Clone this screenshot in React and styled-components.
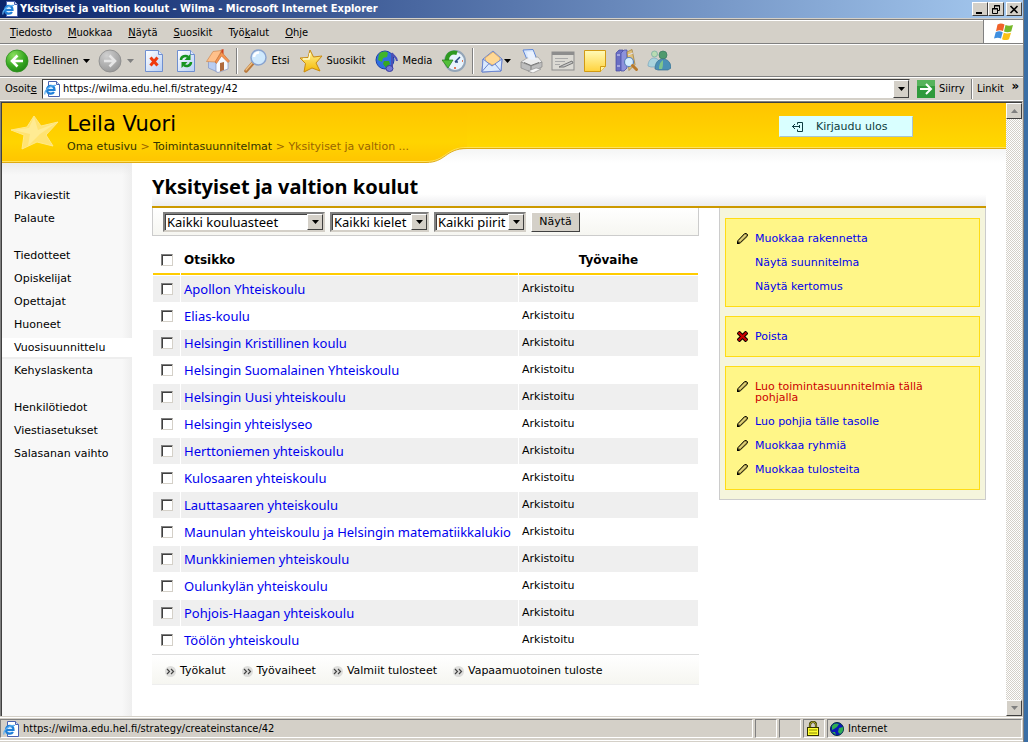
import React from 'react';
import styled, { createGlobalStyle } from 'styled-components'

const Colors = {
    face: '#d4d0c8',
    shadow: '#808080',
    dark: '#404040',
    light: '#ffffff',
    desktop: '#3a6ea5',
    gold: '#cc9900',
    yellow: '#ffcc00',
    link: '#0000ee',
}

const uiFont = '"DejaVu Sans Condensed", "Noto Sans", sans-serif'
const pageFont = '"DejaVu Sans", sans-serif'
const listFont = '"Noto Sans", sans-serif'

const menuItems = [['', 'T', 'iedosto'], ['', 'M', 'uokkaa'], ['', 'N', 'äytä'], ['', 'S', 'uosikit'], ['Työ', 'k', 'alut'], ['', 'O', 'hje']]

const navGroups = [
    ['Pikaviestit', 'Palaute'],
    ['Tiedotteet', 'Opiskelijat', 'Opettajat', 'Huoneet', 'Vuosisuunnittelu', 'Kehyslaskenta'],
    ['Henkilötiedot', 'Viestiasetukset', 'Salasanan vaihto'],
]

const schools = [
    'Apollon Yhteiskoulu',
    'Elias-koulu',
    'Helsingin Kristillinen koulu',
    'Helsingin Suomalainen Yhteiskoulu',
    'Helsingin Uusi yhteiskoulu',
    'Helsingin yhteislyseo',
    'Herttoniemen yhteiskoulu',
    'Kulosaaren yhteiskoulu',
    'Lauttasaaren yhteiskoulu',
    'Maunulan yhteiskoulu ja Helsingin matematiikkalukio',
    'Munkkiniemen yhteiskoulu',
    'Oulunkylän yhteiskoulu',
    'Pohjois-Haagan yhteiskoulu',
    'Töölön yhteiskoulu',
]

const filters = [
    { name: 'Kaikki kouluasteet', width: 162 },
    { name: 'Kaikki kielet', width: 99 },
    { name: 'Kaikki piirit', width: 92 },
]

const actions = [
    [
        { text: 'Muokkaa rakennetta', icon: 'pencil' },
        { text: 'Näytä suunnitelma' },
        { text: 'Näytä kertomus' },
    ],
    [{ text: 'Poista', icon: 'delete' }],
    [
        { text: 'Luo toimintasuunnitelmia tällä pohjalla', icon: 'pencil', hot: true },
        { text: 'Luo pohjia tälle tasolle', icon: 'pencil' },
        { text: 'Muokkaa ryhmiä', icon: 'pencil' },
        { text: 'Muokkaa tulosteita', icon: 'pencil' },
    ],
]

const tools = ['Työkalut', 'Työvaiheet', 'Valmiit tulosteet', 'Vapaamuotoinen tuloste']

/* ---------- icons ---------- */

const Icon = ({ size = 24, children }) => (
    <svg width={size} height={size} viewBox={`0 0 ${size} ${size}`} aria-hidden="true">{children}</svg>
)

const Defs = () => (
    <HiddenSvg width="0" height="0" aria-hidden="true">
        <defs>
            <radialGradient id="green" cx="0.35" cy="0.25" r="0.9">
                <stop offset="0" stopColor="#8be05f" />
                <stop offset="0.55" stopColor="#37a822" />
                <stop offset="1" stopColor="#1c7a12" />
            </radialGradient>
            <radialGradient id="grey" cx="0.35" cy="0.25" r="0.9">
                <stop offset="0" stopColor="#d0d0d0" />
                <stop offset="1" stopColor="#8f8f8f" />
            </radialGradient>
            <linearGradient id="paper" x1="0" y1="0" x2="1" y2="1">
                <stop offset="0" stopColor="#ffffff" />
                <stop offset="1" stopColor="#b9d0f5" />
            </linearGradient>
            <linearGradient id="sun" x1="0" y1="0" x2="0" y2="1">
                <stop offset="0" stopColor="#fff49a" />
                <stop offset="1" stopColor="#f5b800" />
            </linearGradient>
            <linearGradient id="note" x1="0" y1="0" x2="0" y2="1">
                <stop offset="0" stopColor="#fffbb8" />
                <stop offset="1" stopColor="#ffd23c" />
            </linearGradient>
        </defs>
    </HiddenSvg>
)

const BackIcon = () => (
    <Icon>
        <circle cx="12" cy="12" r="11" fill="url(#green)" stroke="#2b8f1b" strokeWidth="0.8" />
        <path d="M18 12H7.500M12.500 6.500L7 12l5.500 5.500" fill="none" stroke="#fff" strokeWidth="2.600" />
    </Icon>
)
const ForwardIcon = () => (
    <Icon>
        <circle cx="12" cy="12" r="11" fill="url(#grey)" stroke="#8a8a8a" strokeWidth="0.8" />
        <path d="M6 12h10.500M11.500 6.500L17 12l-5.500 5.500" fill="none" stroke="#e6e6e6" strokeWidth="2.600" />
    </Icon>
)
const StopIcon = () => (
    <Icon>
        <path d="M3.500 1.500h13l4 4v17h-17z" fill="url(#paper)" stroke="#6f8fd0" />
        <path d="M16.500 1.500v4h4" fill="#dfe9fb" stroke="#6f8fd0" />
        <path d="M8.500 8.500l7 8M15.500 8.500l-7 8" stroke="#f03a0c" strokeWidth="3" />
    </Icon>
)
const RefreshIcon = () => (
    <Icon>
        <path d="M3.500 1.500h13l4 4v17h-17z" fill="url(#paper)" stroke="#6f8fd0" />
        <path d="M16.500 1.500v4h4" fill="#dfe9fb" stroke="#6f8fd0" />
        <path d="M7 11c0-4 5-5 7-3" fill="none" stroke="#169422" strokeWidth="2.500" />
        <path d="M16.500 5v6h-6z" fill="#169422" />
        <path d="M17 13c0 4-5 5-7 3" fill="none" stroke="#169422" strokeWidth="2.500" />
        <path d="M7.500 19v-6h6z" fill="#169422" />
    </Icon>
)
const HomeIcon = () => (
    <Icon>
        <path d="M2.500 12v7l9 4V11L7 5z" fill="#b9cdf2" stroke="#7f92c4" strokeWidth="0.7" />
        <path d="M10 12l6-7 6 7v8l-10 3.500-2-1z" fill="#f7faff" stroke="#7f92c4" strokeWidth="0.7" />
        <path d="M14 14l4-1v8l-4 1.500z" fill="#b06a3c" />
        <path d="M14.500 1l3-1v5l-3 1z" fill="#d4401a" />
        <path d="M.5 12.500L7 2.500 15.500 1.500 9.500 13z" fill="#ffc08a" stroke="#d08a50" strokeWidth="0.7" />
        <path d="M9 13l6.500-10 8 9-1.500 1.500-6.500-6.500-5 7.500z" fill="#f59450" stroke="#c46c30" strokeWidth="0.6" />
    </Icon>
)
const SearchIcon = () => (
    <Icon>
        <path d="M9 14l-7 8" stroke="#b9783b" strokeWidth="3.500" strokeLinecap="round" />
        <path d="M8.500 13.500l-6.500 7.500" stroke="#f0c283" strokeWidth="1.200" strokeLinecap="round" />
        <circle cx="14.500" cy="8.500" r="7.500" fill="#cfe9fd" stroke="#8aa4cf" strokeWidth="1.500" />
        <path d="M10 8a5 5 0 0 1 5-4.500" fill="none" stroke="#fff" strokeWidth="2.500" />
    </Icon>
)
const StarIcon = () => (
    <Icon>
        <path d="M11 1l3.500 7L23 7l-6 7 4 8-8-3-8 4 1.500-8.500L1 9l8-.5z" fill="url(#sun)" stroke="#c98a10" />
        <path d="M11 4l-1 6-6 0" fill="none" stroke="#fffbd0" strokeWidth="1.500" />
    </Icon>
)
const MediaIcon = () => (
    <Icon>
        <circle cx="10" cy="11" r="9" fill="#2f6fe0" stroke="#1c3fa8" />
        <path d="M4 5c3-3 7-3 9-1l-1 4-4 1-1 4-4-2z" fill="#3fb52c" />
        <path d="M9 12l5 0 1 3-4 4-3-4z" fill="#37a822" />
        <path d="M17 19V4c1 3 5 4 5 8" fill="none" stroke="#4b4fb5" strokeWidth="2" />
        <ellipse cx="14.500" cy="19.500" rx="3.500" ry="3" fill="#7478d8" stroke="#3a3e9c" />
    </Icon>
)
const HistoryIcon = () => (
    <Icon>
        <circle cx="13" cy="12" r="10" fill="#e9f4fd" stroke="#93a5b8" strokeWidth="2" />
        <path d="M13 13l5-5M13 13h3" stroke="#2a4a80" strokeWidth="1.500" />
        <path d="M13 18v2M20 12h1" stroke="#e05020" strokeWidth="1.500" />
        <path d="M15 4c-6-2-10 2-10 7" fill="none" stroke="#2f9a20" strokeWidth="4" />
        <path d="M0 11h11l-5 8z" fill="#52bf3a" stroke="#1f7a14" strokeWidth="0.7" />
    </Icon>
)
const MailIcon = () => (
    <Icon>
        <path d="M3 10l10-8 9 8-1 12-19 1z" fill="#bcd5fa" stroke="#6c86cf" />
        <path d="M5 9l8-6 7 6-1 5-6 2-7-3z" fill="#ffd894" stroke="#d79b50" strokeWidth="0.7" />
        <path d="M3 10l9 7 10-7-1 12-19 1z" fill="#dbeafe" stroke="#6c86cf" />
        <path d="M2 22.500l7-8M21 22l-6-7" stroke="#6c86cf" />
    </Icon>
)
const PrintIcon = () => (
    <Icon>
        <path d="M4 1l10-.5 4 10H8z" fill="#d7e7fd" stroke="#5f86d8" />
        <path d="M2 13l6-4 11-1 4 5-10 5z" fill="#ededed" stroke="#999" strokeWidth="0.7" />
        <path d="M2 13l10 4v6L2 19zM12 17l11-4v5l-11 5z" fill="#bdbdbd" stroke="#888" strokeWidth="0.7" />
        <path d="M8 3l6-.5 3 8H9.500z" fill="#eaf2ff" />
        <path d="M9 22l8-3 5 1-8 4z" fill="#f7f7f7" stroke="#888" strokeWidth="0.6" />
        <path d="M5 13.500l7 3 8-3" fill="none" stroke="#777" />
    </Icon>
)
const EditIcon = () => (
    <Icon>
        <rect x="1" y="3" width="22" height="18" fill="#dcdad4" stroke="#8d8d8d" />
        <path d="M1 4.500h22" stroke="#8d8d8d" strokeWidth="3" />
        <path d="M4 9.500h13M4 12.500h10M4 15.500h5" stroke="#aaa" />
        <path d="M8 18l4-2 9-4 1 2-9 4z" fill="#c8c8c8" stroke="#777" />
    </Icon>
)
const NoteIcon = () => (
    <Icon>
        <path d="M1.500 1.500h21v16l-5 5h-16z" fill="url(#note)" stroke="#d19a13" />
        <path d="M17.500 22.500v-5h5" fill="#fff3a0" stroke="#d19a13" />
    </Icon>
)
const ResearchIcon = () => (
    <Icon>
        <path d="M1 4l3-3h4v18l-3 3H1z" fill="#6a6fc4" stroke="#4347a0" strokeWidth="0.7" />
        <path d="M6 4l3-3h3v18l-3 3H6z" fill="#8d92dc" stroke="#4347a0" strokeWidth="0.7" />
        <path d="M12 3l5-2.500 3 15-6 6z" fill="#e0c07a" stroke="#9b7a35" strokeWidth="0.7" />
        <path d="M2 6h3M2 17h3M13 6l5-2" stroke="#dedff8" />
        <circle cx="14" cy="13" r="4.500" fill="#d2ecff" stroke="#5c83b8" strokeWidth="1.200" />
        <path d="M17.500 16.500l4 4" stroke="#b87a2d" strokeWidth="3" strokeLinecap="round" />
    </Icon>
)
const PeopleIcon = () => (
    <Icon>
        <circle cx="7.500" cy="5" r="3" fill="#b9dcb2" stroke="#6fa6a0" strokeWidth="0.7" />
        <path d="M1 17c0-5 3-8 6-8s5 2 5 5v4H4z" fill="#a9d3dd" stroke="#78a5bd" strokeWidth="0.7" />
        <circle cx="16" cy="6" r="4" fill="#4f9a6d" stroke="#3a7a62" strokeWidth="0.7" />
        <path d="M8 20c0-6 3-10 8-10s8 4 8 9l-3 2H11z" fill="#4a90b6" stroke="#36708f" strokeWidth="0.7" />
        <path d="M12 20c0-4 1-7 4-9 0 4 0 7-1 9z" fill="#7fc48c" />
    </Icon>
)
const PageIcon = () => (
    <Icon size={16}>
        <path d="M4.500 0.500h8l3 3v12h-11z" fill="#fff" stroke="#4a62b0" />
        <path d="M12.500 0.500v3h3" fill="#cfdcf5" stroke="#4a62b0" />
        <path d="M3 9h7.500c0-5.500-7.500-5.500-7.500 0 0 4.500 5.500 4.500 7 2" fill="#d8ecfc" stroke="#1f7fd8" strokeWidth="2.200" />
        <path d="M1 13.500c-1-4 5-10 11-9" fill="none" stroke="#5fb0f0" strokeWidth="1.200" />
    </Icon>
)
const FlagIcon = () => (
    <svg width="20" height="18" viewBox="0 0 20 18" aria-hidden="true">
        <path d="M3.500 1.500c3-1.500 4.500-1 7 0L9 8C6.500 7 5 7 2 8.200z" fill="#f0622a" />
        <path d="M11.500 2c2.500 1 4.500 1 7.500 0l-1.800 6.500c-3 1-4.500 1-7.200 0z" fill="#76b82a" />
        <path d="M1.700 9.200c3-1.200 4.500-1 7 0L7 15.500c-2.500-1-4-1-7 0z" fill="#3f8fe0" />
        <path d="M9.800 9.700c2.500 1 4 1 7.200 0l-2 6.500c-3 1.300-4.500 1-7 0z" fill="#fbc116" />
    </svg>
)
const GoIcon = () => (
    <svg width="18" height="18" viewBox="0 0 18 18" aria-hidden="true">
        <rect width="18" height="18" fill="#2f9a3c" />
        <path d="M0 0h18v6H0z" fill="#56b35c" />
        <path d="M3 9h11M9 4l5 5-5 5" fill="none" stroke="#fff" strokeWidth="2" />
    </svg>
)
const Caret = ({ color = '#000' }) => (
    <svg width="7" height="4" viewBox="0 0 7 4" aria-hidden="true"><path d="M0 0h7L3.500 4z" fill={color} /></svg>
)
const CaretUp = () => (
    <svg width="7" height="4" viewBox="0 0 7 4" aria-hidden="true"><path d="M0 4h7L3.500 0z" fill="#808080" /></svg>
)
const LogoutIcon = () => (
    <svg width="11" height="11" viewBox="0 0 11 11" aria-hidden="true">
        <path d="M0 5.500h7M3 3L.5 5.500 3 8M5.500 3.500v-2h5v9h-5v-2M7.500 4v3" fill="none" stroke="#0d3c40" />
    </svg>
)
const PencilIcon = () => (
    <svg width="11" height="11" viewBox="0 0 11 11" aria-hidden="true">
        <path d="M.5 10.500l.5-3L7.500.7 9 .5l1.500 1-.3 1.800-6.700 6.400z" fill="#b9a94c" stroke="#000" />
        <path d="M2.500 8L8.500 2" stroke="#fff3a8" />
        <path d="M0 8v3h3z" />
    </svg>
)
const DeleteIcon = () => (
    <svg width="11" height="11" viewBox="0 0 11 11" aria-hidden="true">
        <path d="M1 1l9 9M10 1l-9 9" stroke="#000" strokeWidth="4.200" />
        <path d="M1.500 1.500l8 8M9.500 1.500l-8 8" stroke="#c80000" strokeWidth="2.400" />
    </svg>
)
const ChevronsIcon = () => (
    <svg width="11" height="11" viewBox="0 0 11 11" aria-hidden="true">
        <circle cx="5.500" cy="5.500" r="5.500" fill="#dededc" />
        <path d="M2 3l2.500 2.500L2 8M6 3l2.500 2.500L6 8" fill="none" stroke="#444" strokeWidth="1.200" />
    </svg>
)
const LockIcon = () => (
    <svg width="14" height="15" viewBox="0 0 14 15" aria-hidden="true">
        <path d="M4 7V4c0-4 6-4 6 0v3" fill="none" stroke="#333300" strokeWidth="2.200" />
        <path d="M4 7V4c0-4 6-4 6 0v3" fill="none" stroke="#d8d040" strokeWidth="0.8" />
        <rect x="1.500" y="6.500" width="11" height="8" fill="#ffff30" stroke="#333300" />
        <path d="M3 9h8M3 12h8" stroke="#888800" />
    </svg>
)
const GlobeIcon = () => (
    <svg width="14" height="14" viewBox="0 0 14 14" aria-hidden="true">
        <circle cx="7" cy="7" r="6.500" fill="#0a18b8" stroke="#003040" />
        <path d="M2 4c2-3 5-3 7-2L7 5 4 7 2 8zM9 6l4-1c1 3-1 6-3 7l-2-2zM2 10l3 0 1 3z" fill="#2fae50" />
    </svg>
)
const HeaderStar = () => (
    <svg width="50" height="36" viewBox="0 0 50 36" aria-hidden="true">
        <path d="M24 1l7 10 17-4-12 13 7 11-16-4-15 7 2-14L1 15l16-3z" fill="#ffe373" stroke="#ffea88" />
        <path d="M24 2l4 13 18-7-16 11-12 12 2-12L3 15l16-2z" fill="#fff0a8" opacity="0.6" />
    </svg>
)

/* Left part of the banner: it hangs lower and steps up with an S-curve. */
const BannerTab = () => (
    <TabSvg width="465" height="62" viewBox="0 0 465 62" aria-hidden="true">
        <defs>
            <linearGradient id="tab" gradientUnits="userSpaceOnUse" x1="0" y1="0" x2="0" y2="60">
                <stop offset="0" stopColor="#ffc400" />
                <stop offset="0.65" stopColor="#ffd400" />
                <stop offset="1" stopColor="#ffc400" />
            </linearGradient>
        </defs>
        <path d="M0 0H465V45C443 45 444 59 424 59H0z" fill="url(#tab)" />
        <path d="M465 44.500C443 44.500 444 58.500 424 58.500H0" fill="none" stroke="#ffe25a" />
        <path d="M465 45.500C443 45.500 444 59.500 424 59.500H0" fill="none" stroke="#e0ab10" />
    </TabSvg>
)

const actionIcons = { pencil: <PencilIcon />, delete: <DeleteIcon /> }

/* ---------- browser chrome ---------- */

const Toolbar = () => (
    <ToolRow>
        <ToolButton $min={92}><BackIcon />Edellinen<Spacer /><Caret /></ToolButton>
        <ToolButton $min={44} aria-label="Seuraava"><ForwardIcon /><Spacer /><Caret color="#808080" /></ToolButton>
        <ToolButton aria-label="Pysäytä"><StopIcon /></ToolButton>
        <ToolButton aria-label="Päivitä"><RefreshIcon /></ToolButton>
        <ToolButton aria-label="Koti"><HomeIcon /></ToolButton>
        <Divider />
        <ToolButton $min={55}><SearchIcon />Etsi</ToolButton>
        <ToolButton $min={76}><StarIcon />Suosikit</ToolButton>
        <ToolButton $min={67}><MediaIcon />Media</ToolButton>
        <ToolButton aria-label="Historia"><HistoryIcon /></ToolButton>
        <Divider />
        <ToolButton $tight aria-label="Posti"><MailIcon /><Caret /></ToolButton>
        <ToolButton aria-label="Tulosta"><PrintIcon /></ToolButton>
        <ToolButton aria-label="Muokkaa"><EditIcon /></ToolButton>
        <ToolButton aria-label="Muistiinpano"><NoteIcon /></ToolButton>
        <ToolButton aria-label="Tutki"><ResearchIcon /></ToolButton>
        <ToolButton aria-label="Messenger"><PeopleIcon /></ToolButton>
    </ToolRow>
)

const AddressBar = () => (
    <AddressRow>
        <AddressLabel htmlFor="address">Osoit<u>e</u></AddressLabel>
        <AddressField>
            <PageIcon />
            <AddressInput id="address" defaultValue="https://wilma.edu.hel.fi/strategy/42" />
            <DropButton aria-label="Avaa lista"><Caret /></DropButton>
        </AddressField>
        <GoButton><GoIcon />Siirry</GoButton>
        <Links>Linkit<b>»</b></Links>
    </AddressRow>
)

const WindowControls = () => (
    <Controls>
        <ControlButton aria-label="Pienennä">
            <svg width="10" height="9" viewBox="0 0 10 9"><path d="M1 7h6v2H1z" /></svg>
        </ControlButton>
        <ControlButton aria-label="Palauta">
            <svg width="10" height="9" viewBox="0 0 10 9">
                <path d="M3.500 3V.5h5v5H7M3 1h6M1.500 3.500h5v5h-5zM1 4h6" fill="none" stroke="#000" />
            </svg>
        </ControlButton>
        <ControlButton aria-label="Sulje" $spaced>
            <svg width="10" height="9" viewBox="0 0 10 9"><path d="M1.500 1l7 7M8.500 1l-7 7" stroke="#000" strokeWidth="1.600" /></svg>
        </ControlButton>
    </Controls>
)

/* ---------- page ---------- */

const PageHeader = () => (
    <Banner>
        <BannerTab />
        <BannerStar><HeaderStar /></BannerStar>
        <BannerText>
            <UserName>Leila Vuori</UserName>
            <Crumbs>
                <a href="#etusivu">Oma etusivu</a> &gt; <a href="#suunnitelmat">Toimintasuunnitelmat</a> &gt; Yksityiset ja valtion ...
            </Crumbs>
        </BannerText>
        <LogoutButton><LogoutIcon />Kirjaudu ulos</LogoutButton>
    </Banner>
)

const Sidebar = () => (
    <SideNav>
        {navGroups.map(group => (
            <NavGroup key={group[0]}>
                {group.map(item => (
                    <NavItem key={item} href="#nav" $active={item === 'Vuosisuunnittelu'}>{item}</NavItem>
                ))}
            </NavGroup>
        ))}
    </SideNav>
)

const FilterBar = () => (
    <Filters>
        {filters.map(f => (
            <SelectBox key={f.name} $width={f.width}>
                <Select aria-label={f.name}><option>{f.name}</option></Select>
                <SelectArrow><Caret /></SelectArrow>
            </SelectBox>
        ))}
        <ShowButton>Näytä</ShowButton>
    </Filters>
)

const SchoolTable = () => (
    <Table>
        <thead>
            <tr>
                <CheckHead><Check type="checkbox" aria-label="Valitse kaikki" /></CheckHead>
                <Head>Otsikko</Head>
                <Head $center>Työvaihe</Head>
            </tr>
        </thead>
        <tbody>
            {schools.map((school, i) => (
                <Row key={school} $odd={i % 2 === 0}>
                    <CheckCell><Check type="checkbox" aria-label={school} /></CheckCell>
                    <NameCell><a href="#koulu">{school}</a></NameCell>
                    <td>Arkistoitu</td>
                </Row>
            ))}
        </tbody>
    </Table>
)

const ActionPanel = () => (
    <Panel>
        {actions.map(group => (
            <PanelBox key={group[0].text}>
                {group.map(action => (
                    <Action key={action.text}>
                        <ActionIcon>{actionIcons[action.icon]}</ActionIcon>
                        <ActionLink href="#toiminto" $hot={action.hot}>{action.text}</ActionLink>
                    </Action>
                ))}
            </PanelBox>
        ))}
    </Panel>
)

const App = () => {
    return (
        <Desktop>
            <GlobalStyle />
            <Defs />
            <Window>
                <TitleBar>
                    <PageIcon />
                    <WindowTitle>Yksityiset ja valtion koulut - Wilma - Microsoft Internet Explorer</WindowTitle>
                    <WindowControls />
                </TitleBar>
                <MenuBar>
                    {menuItems.map(([before, key, after]) => (
                        <MenuItem key={key}>{before}<u>{key}</u>{after}</MenuItem>
                    ))}
                    <FlagBox><FlagIcon /></FlagBox>
                </MenuBar>
                <Toolbar />
                <AddressBar />
                <Viewport>
                    <Page>
                        <PageHeader />
                        <Body>
                            <Sidebar />
                            <Main>
                                <Title>Yksityiset ja valtion koulut</Title>
                                <Columns>
                                    <ListColumn>
                                        <FilterBar />
                                        <SchoolTable />
                                        <ListTools>
                                            {tools.map(t => <ListTool key={t}><ChevronsIcon />{t}</ListTool>)}
                                        </ListTools>
                                    </ListColumn>
                                    <ActionPanel />
                                </Columns>
                            </Main>
                        </Body>
                    </Page>
                    <ScrollTrack>
                        <ScrollButton aria-label="Ylös"><CaretUp /></ScrollButton>
                        <ScrollButton aria-label="Alas"><Caret color="#808080" /></ScrollButton>
                    </ScrollTrack>
                </Viewport>
                <StatusBar>
                    <StatusPane $grow><PageIcon />https://wilma.edu.hel.fi/strategy/createinstance/42</StatusPane>
                    <StatusPane $width={22} />
                    <StatusPane $width={22} />
                    <StatusPane $width={22}><LockIcon /></StatusPane>
                    <StatusPane $width={195}><GlobeIcon />Internet</StatusPane>
                </StatusBar>
            </Window>
        </Desktop>
    )
}
export default App

const GlobalStyle = createGlobalStyle`
  * { box-sizing: border-box; }
  body { margin: 0; }
  svg { display: block; flex: none; }
  button {
    margin: 0;
    padding: 0;
    border: 0;
    background: none;
    color: #000;
    font: inherit;
  }
  a { text-decoration: none; }
`
const HiddenSvg = styled.svg`
  position: absolute;
`
const Desktop = styled.div`
    height: 100vh;
    padding-right: 4px;
    background: ${Colors.desktop};
    color: #000;
    font: 11px/14px ${uiFont};
`
const Window = styled.div`
    display: flex;
    flex-direction: column;
    height: 100%;
    background: ${Colors.face};
    border-right: 1px solid ${Colors.shadow};
`
const TitleBar = styled.div`
    display: flex;
    align-items: center;
    flex: none;
    height: 18px;
    padding: 0 1px 0 2px;
    gap: 2px;
    background: linear-gradient(to right, #0a246a, #a6caf0);
`
const WindowTitle = styled.span`
    flex: 1;
    color: white;
    font-weight: bold;
`
const Controls = styled.div`
    display: flex;
`
const ControlButton = styled.button`
    display: flex;
    align-items: center;
    justify-content: center;
    width: 16px;
    height: 14px;
    margin-left: ${p => p.$spaced ? '2px' : '0'};
    background: ${Colors.face};
    border: 1px solid;
    border-color: ${Colors.light} ${Colors.dark} ${Colors.dark} ${Colors.light};
`
const MenuBar = styled.div`
    display: flex;
    align-items: center;
    flex: none;
    height: 25px;
    margin-top: 1px;
    padding-left: 2px;
    border-top: 1px solid ${Colors.shadow};
    border-bottom: 1px solid ${Colors.shadow};
    box-shadow: inset 0 1px ${Colors.light};
`
const MenuItem = styled.button`
    padding: 2px 8px 0;
`
const FlagBox = styled.div`
    display: flex;
    align-items: center;
    justify-content: center;
    align-self: stretch;
    width: 40px;
    margin-left: auto;
    background: white;
    border-left: 1px solid ${Colors.shadow};
`
const ToolRow = styled.div`
    display: flex;
    align-items: center;
    flex: none;
    height: 33px;
    padding-left: 1px;
    border-top: 1px solid ${Colors.light};
    border-bottom: 1px solid ${Colors.shadow};
`
const ToolButton = styled.button`
    display: flex;
    align-items: center;
    gap: ${p => p.$tight ? 0 : 4}px;
    min-width: ${p => p.$min || 32}px;
    padding: 0 4px;
`
const Spacer = styled.span`
    flex: 1;
    margin-left: -4px;
`
const Divider = styled.span`
    width: 2px;
    height: 26px;
    margin: 0 2px;
    border-left: 1px solid ${Colors.shadow};
    border-right: 1px solid ${Colors.light};
`
const AddressRow = styled.div`
    display: flex;
    align-items: center;
    flex: none;
    height: 24px;
    padding-left: 5px;
    border-top: 1px solid ${Colors.light};
    border-bottom: 1px solid ${Colors.light};
`
const AddressLabel = styled.label`
    width: 37px;
`
const AddressField = styled.div`
    display: flex;
    align-items: center;
    flex: 1;
    height: 20px;
    padding-left: 1px;
    background: white;
    border: 1px solid;
    border-color: ${Colors.dark} ${Colors.face} ${Colors.face} ${Colors.dark};
`
const AddressInput = styled.input`
    flex: 1;
    padding: 0 3px;
    border: 0;
    outline: 0;
    background: none;
    font: inherit;
`
const DropButton = styled.button`
    display: flex;
    align-items: center;
    justify-content: center;
    width: 16px;
    height: 18px;
    background: ${Colors.face};
    border: 1px solid;
    border-color: ${Colors.light} ${Colors.dark} ${Colors.dark} ${Colors.light};
`
const GoButton = styled.button`
    display: flex;
    align-items: center;
    gap: 4px;
    width: 61px;
    padding-left: 7px;
`
const Links = styled.div`
    display: flex;
    justify-content: space-between;
    width: 52px;
    padding: 3px 4px 3px 5px;
    border-left: 1px solid ${Colors.shadow};
    box-shadow: inset 1px 0 ${Colors.light};

    b {
        font-size: 13px;
        line-height: 8px;
    }
`
const Viewport = styled.div`
    display: flex;
    flex: 1;
    min-height: 0;
    padding: 1px 0 0 1px;
    background: ${Colors.dark};
    border-top: 1px solid ${Colors.shadow};
    border-left: 1px solid ${Colors.shadow};
    border-right: 1px solid ${Colors.face};
`
const Page = styled.div`
    display: flex;
    flex-direction: column;
    flex: 1;
    overflow: hidden;
    background: white;
    font-family: ${pageFont};
`
const Banner = styled.header`
    display: flex;
    position: relative;
    flex: none;
    height: 60px;
    padding-right: 93px;
    background: linear-gradient(#ffc400, #ffd800 44px, #ffe25a 44px, #ffe25a 45px, #e0ab10 45px, #e0ab10 46px, #f4f5f5 46px, #ffffff 60px);
`
const TabSvg = styled.svg`
    position: absolute;
    left: 0;
    top: 0;
`
const BannerStar = styled.div`
    position: relative;
    width: 65px;
    padding: 12px 0 0 8px;
`
const BannerText = styled.div`
    position: relative;
    flex: 1;
    padding-top: 9px;
`
const UserName = styled.div`
    font-size: 21px;
    line-height: 24px;
`
const Crumbs = styled.div`
    padding-top: 4px;
    color: #996600;

    a {
        color: #333300;
    }
`
const LogoutButton = styled.button`
    display: flex;
    position: relative;
    align-items: center;
    gap: 13px;
    width: 134px;
    height: 21px;
    margin-top: 13px;
    padding-left: 12px;
    background: #d9ffff;
    border: 1px solid;
    border-color: #d9ffff #a8c4d0 #a8c4d0 #d9ffff;
    color: #0d3c40;
`
const Body = styled.div`
    display: flex;
    flex: 1;
`
const SideNav = styled.nav`
    display: flex;
    flex-direction: column;
    flex: none;
    gap: 18px;
    width: 130px;
    padding-top: 23px;
    background:
        linear-gradient(#ebebeb, transparent 12px),
        linear-gradient(to right, #f8f8f8 120px, #eeeeee);
`
const NavGroup = styled.div`
    display: flex;
    flex-direction: column;
    gap: 4px;
`
const NavItem = styled.a`
    padding-left: 12px;
    color: #000;
    line-height: 19px;
    background: ${p => p.$active ? 'white' : 'none'};
    box-shadow: ${p => p.$active ? '0 2px #eeeeee' : 'none'};
`
const Main = styled.main`
    flex: 1;
    padding: 11px 20px 0 20px;
`
const Title = styled.h1`
    margin: 0;
    padding-bottom: 6px;
    border-bottom: 2px solid ${Colors.gold};
    background: linear-gradient(#ffffff 20px, #ececee);
    font: bold 20px/26px ${listFont};
`
const Columns = styled.div`
    display: flex;
    align-items: flex-start;
    gap: 20px;
`
const ListColumn = styled.div`
    flex: 1;
`
const Filters = styled.div`
    display: flex;
    align-items: center;
    gap: 5px;
    height: 28px;
    padding-left: 10px;
    background: linear-gradient(#ffffff, #f6f6f1);
    border: 1px solid #cccccc;
    border-top: 0;
`
const SelectBox = styled.span`
    display: flex;
    position: relative;
    width: ${p => p.$width}px;
    height: 20px;
    border: 2px solid;
    border-color: ${Colors.shadow} ${Colors.face} ${Colors.face} ${Colors.shadow};
    background: white;
    box-shadow: inset 1px 1px ${Colors.dark};
`
const Select = styled.select`
    flex: 1;
    padding: 0 0 0 2px;
    border: 0;
    outline: 0;
    appearance: none;
    background: none;
    color: #000;
    font: 13px/16px ${listFont};
`
const SelectArrow = styled.span`
    display: flex;
    position: absolute;
    top: 0;
    right: 0;
    align-items: center;
    justify-content: center;
    width: 16px;
    height: 16px;
    background: ${Colors.face};
    border: 1px solid;
    border-color: ${Colors.light} ${Colors.dark} ${Colors.dark} ${Colors.light};
    pointer-events: none;
`
const ShowButton = styled.button`
    width: 49px;
    height: 20px;
    background: ${Colors.face};
    border: 1px solid;
    border-color: ${Colors.light} ${Colors.dark} ${Colors.dark} ${Colors.light};
`
const Table = styled.table`
    width: 100%;
    margin-top: 9px;
    border-spacing: 1px;
    font-size: 11px;

    td, th {
        padding: 0 3px;
    }
`
const Head = styled.th`
    height: 29px;
    border-bottom: 2px solid ${Colors.yellow};
    font-size: 12px;
    text-align: ${p => p.$center ? 'center' : 'left'};
`
const CheckHead = styled(Head)`
    width: 27px;
`
const Row = styled.tr`
    height: 26px;
    background: ${p => p.$odd ? '#efefef' : 'white'};
`
const CheckCell = styled.td`
    text-align: center;
`
const NameCell = styled.td`
    width: 337px;
    font-family: ${listFont};
    font-size: 13px;
    white-space: nowrap;

    a {
        color: ${Colors.link};
    }
`
const Check = styled.input`
    display: block;
    appearance: none;
    width: 12px;
    height: 12px;
    margin: 0 auto;
    background: white;
    border: 1px solid;
    border-color: ${Colors.shadow} ${Colors.face} ${Colors.face} ${Colors.shadow};
    box-shadow: inset 1px 1px ${Colors.dark};
`
const ListTools = styled.div`
    display: flex;
    align-items: center;
    gap: 16px;
    height: 31px;
    padding: 3px 0 0 13px;
    background: linear-gradient(#ffffff, #f6f6f1);
    border-top: 1px solid #dddddd;
    border-bottom: 1px solid #eeeeee;
`
const ListTool = styled.button`
    display: flex;
    align-items: center;
    gap: 4px;
`
const Panel = styled.aside`
    display: flex;
    flex-direction: column;
    flex: none;
    gap: 9px;
    width: 267px;
    padding: 10px 5px 9px;
    background: #f5f5dc;
    border: 1px solid #cccccc;
    border-top: 0;
`
const PanelBox = styled.div`
    padding: 8px 12px 7px 11px;
    background: #fff688;
    border: 1px solid #ffdc14;
`
const Action = styled.div`
    display: flex;
    padding: 6px 0 7px;
    line-height: 11px;
`
const ActionIcon = styled.span`
    flex: none;
    width: 18px;
`
const ActionLink = styled.a`
    max-width: 190px;
    color: ${p => p.$hot ? '#cc0000' : Colors.link};
`
const ScrollTrack = styled.div`
    display: flex;
    flex-direction: column;
    justify-content: space-between;
    width: 16px;
    background: repeating-conic-gradient(${Colors.face} 0 25%, #ffffff 0 50%) 0 0 / 2px 2px;
`
const ScrollButton = styled.button`
    display: flex;
    align-items: center;
    justify-content: center;
    width: 16px;
    height: 16px;
    background: ${Colors.face};
    border: 1px solid;
    border-color: ${Colors.light} ${Colors.dark} ${Colors.dark} ${Colors.light};
`
const StatusBar = styled.footer`
    display: flex;
    flex: none;
    gap: 2px;
    height: 26px;
    padding: 2px 1px 3px 0;
    border-top: 1px solid ${Colors.face};
    border-bottom: 1px solid ${Colors.face};
    box-shadow: inset 0 1px ${Colors.light}, inset 0 -1px ${Colors.light};
`
const StatusPane = styled.div`
    display: flex;
    align-items: center;
    flex: ${p => p.$grow ? '1' : 'none'};
    gap: 4px;
    width: ${p => p.$width ? `${p.$width}px` : 'auto'};
    padding-left: 2px;
    border: 1px solid;
    border-color: ${Colors.shadow} ${Colors.light} ${Colors.light} ${Colors.shadow};
`
